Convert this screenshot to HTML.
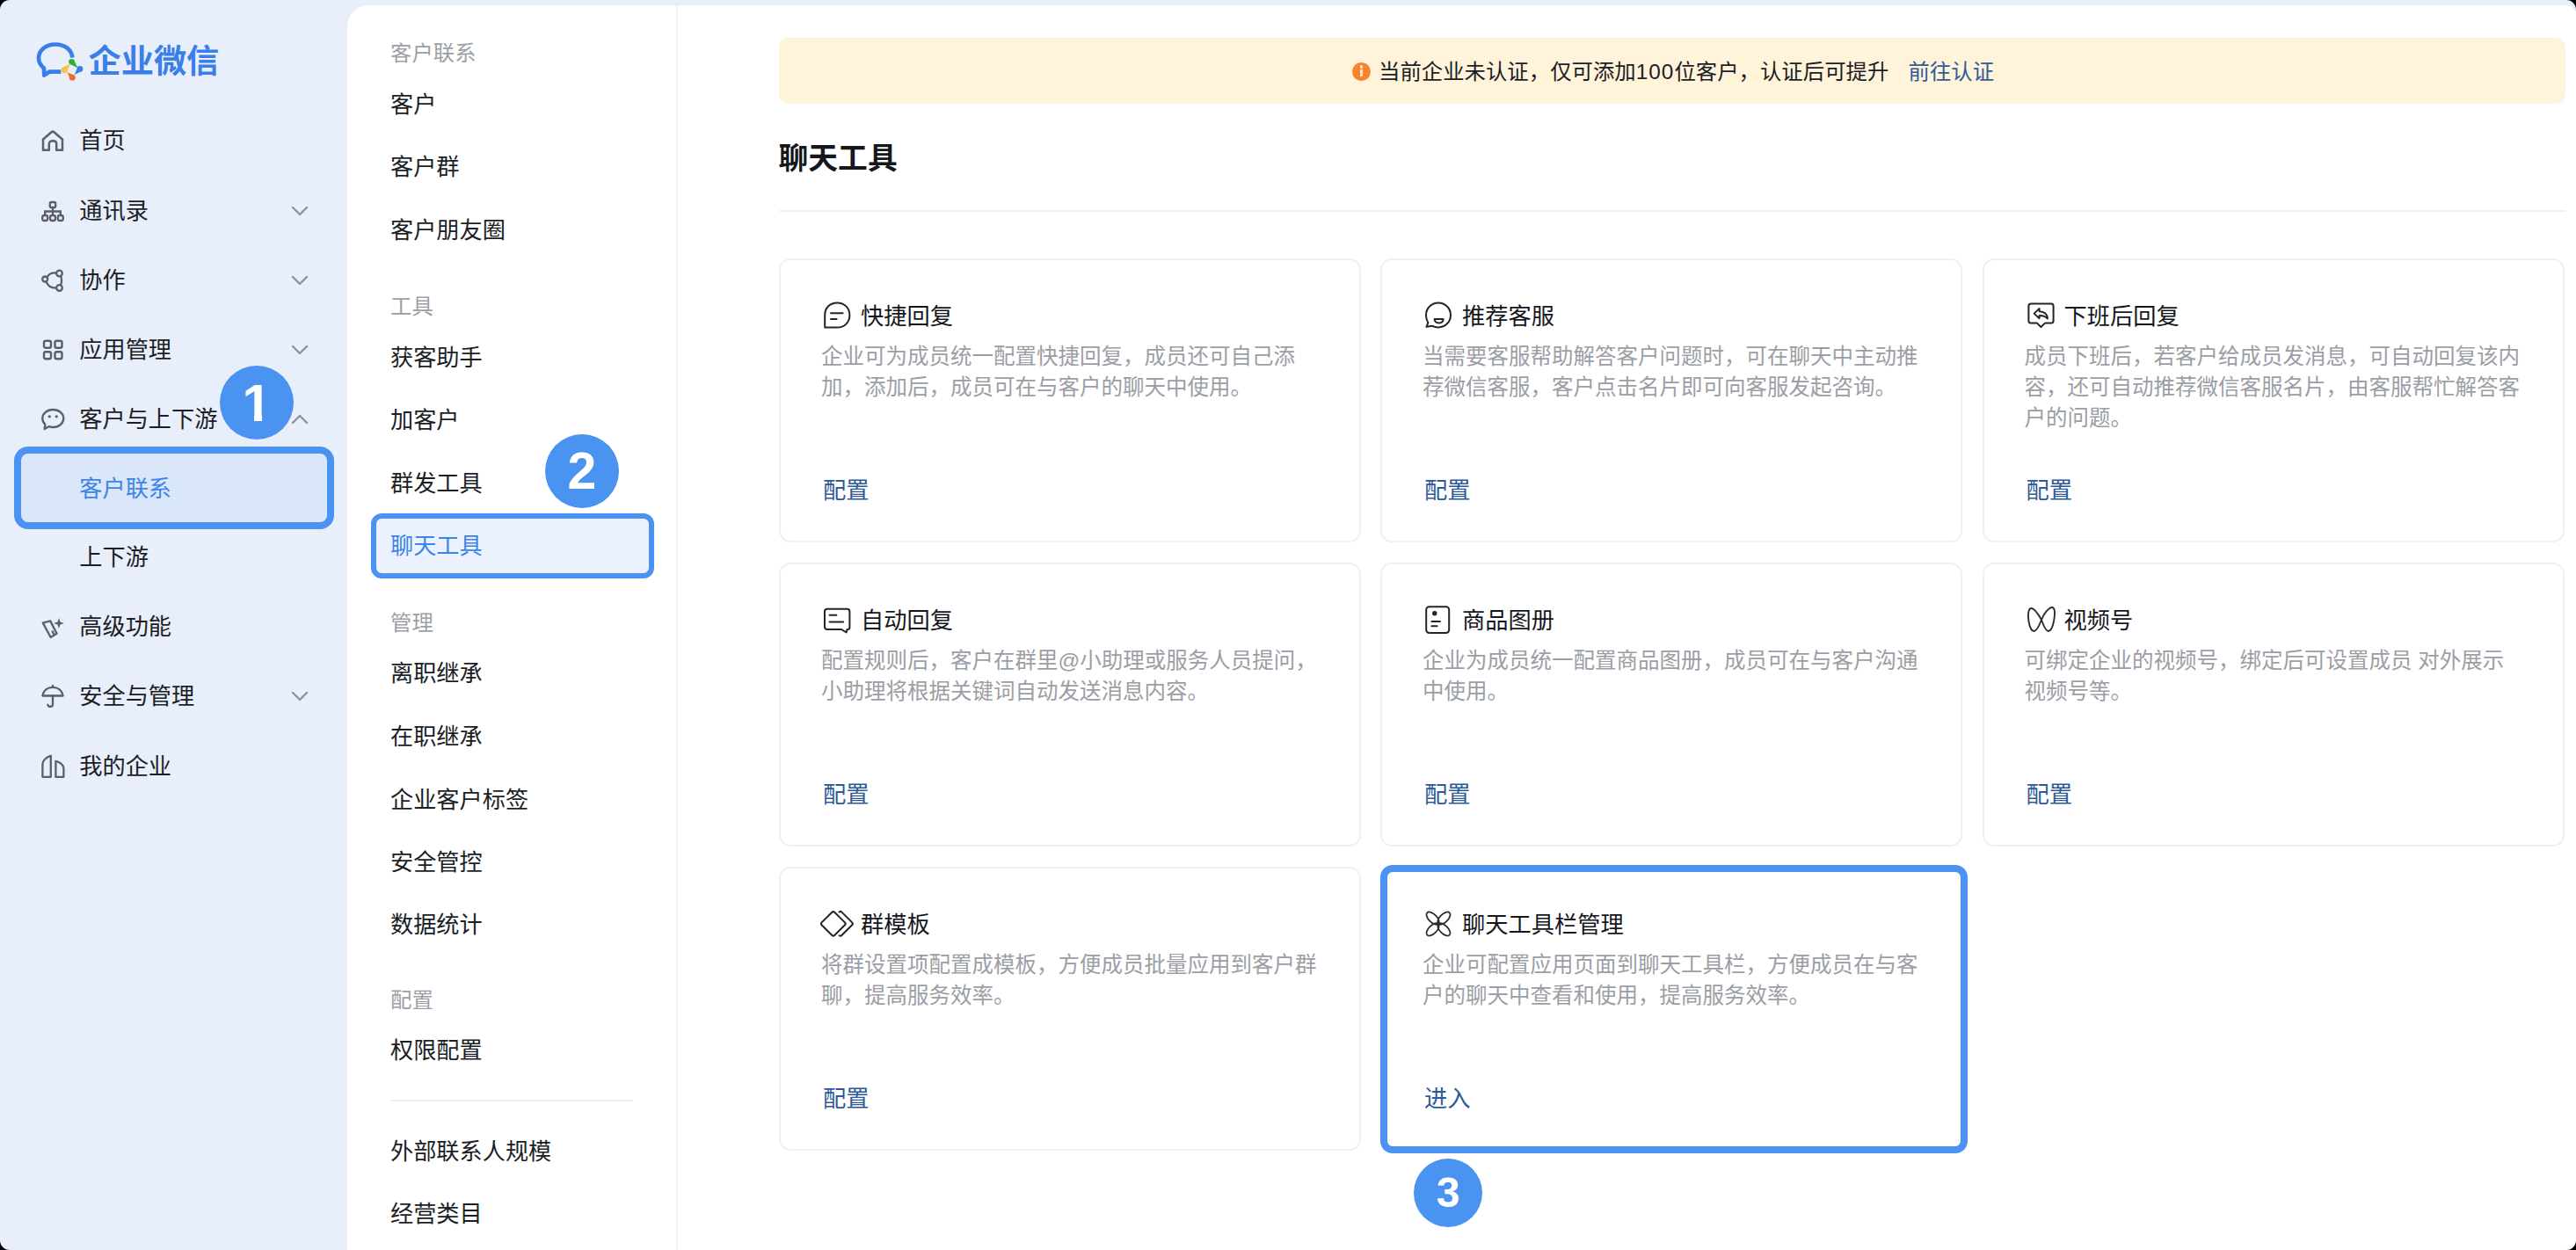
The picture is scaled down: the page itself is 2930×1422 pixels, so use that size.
<!DOCTYPE html>
<html lang="zh-CN"><head><meta charset="utf-8"><title>企业微信 - 聊天工具</title>
<style>
html,body{margin:0;padding:0;}
html{background:#000;}
body{width:2930px;height:1422px;position:relative;overflow:hidden;background:#e8eefa;border-radius:11px;font-family:"Liberation Sans", "Noto Sans CJK SC", sans-serif;}
.t{position:absolute;white-space:nowrap;}
.abs{position:absolute;}
.panel{position:absolute;left:395px;top:6px;width:2535px;height:1416px;background:#fff;border-radius:24px 11px 11px 0;}
.vline{position:absolute;left:769px;top:6px;width:2px;height:1416px;background:#eff0f6;}
.card{position:absolute;width:658px;height:319px;border:2px solid #f0f0f2;border-radius:13px;background:#fff;}
.desc{position:absolute;font-size:24.4px;line-height:34px;color:#9a9da4;white-space:nowrap;}
svg{position:absolute;overflow:visible;}
.circ{position:absolute;border-radius:50%;background:#4a93f0;color:#fff;text-align:center;font-weight:700;}
</style></head><body>

<svg style="left:0;top:0" width="120" height="100" viewBox="0 0 120 100"><path d="M82.3 65.5 C81.8 56.5 73.5 50.5 63 50.5 C52 50.5 44 57.5 44 66 C44 70.6 46.3 74.6 50 77.6 L50.2 85.6 L56.5 81.6 L69.4 81.6" fill="none" stroke="#3a7fe9" stroke-width="4.7" stroke-linejoin="round" stroke-linecap="butt"/><circle cx="81.5" cy="70.2" r="3.3" fill="#2fad3c"/><path d="M79.1 72.5 L88.6 77.6 L83.9 67.9 Z" fill="#2fad3c"/><circle cx="73.4" cy="79.6" r="3.6" fill="#f6c640"/><path d="M76.0 82.1 L80.2 72.6 L70.8 77.1 Z" fill="#f6c640"/><circle cx="82.3" cy="88.2" r="3.4" fill="#ee6a2d"/><path d="M84.8 85.9 L76.8 82.2 L79.8 90.5 Z" fill="#ee6a2d"/><circle cx="91.0" cy="78.4" r="3.3" fill="#3a7fe9"/><path d="M88.6 76.1 L84.6 85.0 L93.4 80.7 Z" fill="#3a7fe9"/></svg>
<div class="t" style="left:100.5px;top:41.50px;height:56px;line-height:56px;font-size:37.2px;color:#3a7fe9;font-weight:700;">企业微信</div>
<svg style="left:47px;top:147px" width="26" height="26" viewBox="0 0 26 26"><path d="M2 11.5 L11.6 3.2 C12.4 2.5 13.6 2.5 14.4 3.2 L24 11.5 V23.8 H17.2 V16.5 C17.2 14.5 15.5 13.3 13 13.3 C10.5 13.3 8.8 14.5 8.8 16.5 V23.8 H2 Z" fill="none" stroke="#5a5f6a" stroke-width="2.5" stroke-linejoin="round"/></svg>
<div class="t" style="left:90.3px;top:140.80px;height:39px;line-height:39px;font-size:26.2px;color:#1b1e25;font-weight:400;">首页</div>
<svg style="left:47px;top:227px" width="26" height="26" viewBox="0 0 26 26"><g fill="none" stroke="#5a5f6a" stroke-width="2.3"><rect x="9.8" y="3" width="6.4" height="6" rx="1.6"/><rect x="1.2" y="18" width="6" height="6" rx="2.2"/><rect x="10" y="18" width="6" height="6" rx="2.2"/><rect x="18.8" y="18" width="6" height="6" rx="2.2"/><path d="M13 9 V13.5 M4.2 18 V13.5 H21.8 V18 M13 13.5 V18"/></g></svg>
<div class="t" style="left:90.3px;top:220.80px;height:39px;line-height:39px;font-size:26.2px;color:#1b1e25;font-weight:400;">通讯录</div>
<svg style="left:331px;top:234px" width="20" height="12" viewBox="0 0 20 12"><path d="M2 2 L10 10 L18 2" fill="none" stroke="#8d929c" stroke-width="2.4" stroke-linecap="round" stroke-linejoin="round"/></svg>
<svg style="left:47px;top:306px" width="26" height="26" viewBox="0 0 26 26"><g fill="none" stroke="#5a5f6a" stroke-width="2.3"><circle cx="20.5" cy="5" r="3.3"/><circle cx="20.5" cy="21.5" r="3.3"/><circle cx="4.2" cy="11.5" r="3"/><path d="M17.2 4.5 C11.5 4 8 6.3 6.6 9.5 M5.5 14.4 C7.2 19 11.5 21.8 17.2 21.6 M22 8 C23.4 11.3 23.4 15 22 18.5"/></g></svg>
<div class="t" style="left:90.3px;top:299.80px;height:39px;line-height:39px;font-size:26.2px;color:#1b1e25;font-weight:400;">协作</div>
<svg style="left:331px;top:313px" width="20" height="12" viewBox="0 0 20 12"><path d="M2 2 L10 10 L18 2" fill="none" stroke="#8d929c" stroke-width="2.4" stroke-linecap="round" stroke-linejoin="round"/></svg>
<svg style="left:47px;top:385px" width="26" height="26" viewBox="0 0 26 26"><g fill="none" stroke="#5a5f6a" stroke-width="2.4"><rect x="3" y="2.8" width="8" height="8" rx="2"/><rect x="15.5" y="2.8" width="8" height="8" rx="2"/><rect x="3" y="15.3" width="8" height="8" rx="2"/><rect x="15.5" y="15.3" width="8" height="8" rx="2"/></g></svg>
<div class="t" style="left:90.3px;top:378.80px;height:39px;line-height:39px;font-size:26.2px;color:#1b1e25;font-weight:400;">应用管理</div>
<svg style="left:331px;top:392px" width="20" height="12" viewBox="0 0 20 12"><path d="M2 2 L10 10 L18 2" fill="none" stroke="#8d929c" stroke-width="2.4" stroke-linecap="round" stroke-linejoin="round"/></svg>
<svg style="left:47px;top:464px" width="26" height="26" viewBox="0 0 26 26"><g fill="none" stroke="#5a5f6a" stroke-width="2.3"><path d="M13.3 2 C20 2 25.3 6.4 25.3 12 C25.3 17.6 20 22 13.3 22 C11.6 22 10 21.7 8.5 21.2 L3.6 24 L4.4 18.8 C2.4 17 1.3 14.6 1.3 12 C1.3 6.4 6.6 2 13.3 2 Z" stroke-linejoin="round"/></g><circle cx="9.3" cy="9.8" r="1.6" fill="#5a5f6a"/><circle cx="17.3" cy="9.8" r="1.6" fill="#5a5f6a"/></svg>
<div class="t" style="left:90.3px;top:457.80px;height:39px;line-height:39px;font-size:26.2px;color:#1b1e25;font-weight:400;">客户与上下游</div>
<svg style="left:331px;top:471px" width="20" height="12" viewBox="0 0 20 12"><path d="M2 10 L10 2 L18 10" fill="none" stroke="#8d929c" stroke-width="2.4" stroke-linecap="round" stroke-linejoin="round"/></svg>
<svg style="left:47px;top:700px" width="26" height="26" viewBox="0 0 26 26"><g fill="none" stroke="#5a5f6a" stroke-width="2.3" stroke-linejoin="round"><path d="M1.8 8.6 L10.2 6.4 L17.6 20.8 L10.6 25 Z"/><path d="M12.2 17.5 L15.2 23"/></g><path d="M20 3 L21.5 7.6 L26 9 L21.5 10.4 L20 15 L18.5 10.4 L14 9 L18.5 7.6 Z" fill="#5a5f6a"/></svg>
<div class="t" style="left:90.3px;top:693.80px;height:39px;line-height:39px;font-size:26.2px;color:#1b1e25;font-weight:400;">高级功能</div>
<svg style="left:47px;top:779px" width="26" height="26" viewBox="0 0 26 26"><g fill="none" stroke="#5a5f6a" stroke-width="2.3" stroke-linecap="round" stroke-linejoin="round"><path d="M1.4 12.5 C2.4 6.5 7 2.8 13 2.8 C19 2.8 23.6 6.5 24.6 12.5 Z"/><path d="M13 0.8 V2.8 M13 12.5 V22.5 C13 25.4 8.4 25.8 7.4 22.8"/></g></svg>
<div class="t" style="left:90.3px;top:772.80px;height:39px;line-height:39px;font-size:26.2px;color:#1b1e25;font-weight:400;">安全与管理</div>
<svg style="left:331px;top:786px" width="20" height="12" viewBox="0 0 20 12"><path d="M2 2 L10 10 L18 2" fill="none" stroke="#8d929c" stroke-width="2.4" stroke-linecap="round" stroke-linejoin="round"/></svg>
<svg style="left:47px;top:859px" width="26" height="26" viewBox="0 0 26 26"><g fill="none" stroke="#5a5f6a" stroke-width="2.3" stroke-linejoin="round"><path d="M1.4 24.8 V10.5 C1.4 6 6 2.2 10.8 0.8 V24.8 Z"/><path d="M16.4 24.8 V6.8 C21 7.8 25.4 11 25.4 15 V24.8 Z"/></g></svg>
<div class="t" style="left:90.3px;top:852.80px;height:39px;line-height:39px;font-size:26.2px;color:#1b1e25;font-weight:400;">我的企业</div>
<div class="abs" style="left:16px;top:508px;width:348px;height:78px;border:8px solid #4a93f0;border-radius:16px;background:#dae6fa;"></div>
<div class="t" style="left:90.3px;top:536.80px;height:39px;line-height:39px;font-size:26.2px;color:#3d84e8;font-weight:400;">客户联系</div>
<div class="t" style="left:90.3px;top:614.80px;height:39px;line-height:39px;font-size:26.2px;color:#1b1e25;font-weight:400;">上下游</div>
<div class="panel"></div><div class="vline"></div>
<div class="abs" style="left:422px;top:584px;width:310px;height:62px;border:6px solid #4a93f0;border-radius:12px;background:#ebf1fd;"></div>
<div class="t" style="left:444px;top:41.50px;height:37px;line-height:37px;font-size:24.4px;color:#9c9fa6;font-weight:400;">客户联系</div>
<div class="t" style="left:444px;top:99.50px;height:39px;line-height:39px;font-size:26.2px;color:#1b1e25;font-weight:400;">客户</div>
<div class="t" style="left:444px;top:170.50px;height:39px;line-height:39px;font-size:26.2px;color:#1b1e25;font-weight:400;">客户群</div>
<div class="t" style="left:444px;top:242.50px;height:39px;line-height:39px;font-size:26.2px;color:#1b1e25;font-weight:400;">客户朋友圈</div>
<div class="t" style="left:444px;top:329.50px;height:37px;line-height:37px;font-size:24.4px;color:#9c9fa6;font-weight:400;">工具</div>
<div class="t" style="left:444px;top:387.50px;height:39px;line-height:39px;font-size:26.2px;color:#1b1e25;font-weight:400;">获客助手</div>
<div class="t" style="left:444px;top:458.50px;height:39px;line-height:39px;font-size:26.2px;color:#1b1e25;font-weight:400;">加客户</div>
<div class="t" style="left:444px;top:530.50px;height:39px;line-height:39px;font-size:26.2px;color:#1b1e25;font-weight:400;">群发工具</div>
<div class="t" style="left:444px;top:601.50px;height:39px;line-height:39px;font-size:26.2px;color:#3d84e8;font-weight:400;">聊天工具</div>
<div class="t" style="left:444px;top:689.50px;height:37px;line-height:37px;font-size:24.4px;color:#9c9fa6;font-weight:400;">管理</div>
<div class="t" style="left:444px;top:746.50px;height:39px;line-height:39px;font-size:26.2px;color:#1b1e25;font-weight:400;">离职继承</div>
<div class="t" style="left:444px;top:818.50px;height:39px;line-height:39px;font-size:26.2px;color:#1b1e25;font-weight:400;">在职继承</div>
<div class="t" style="left:444px;top:890.50px;height:39px;line-height:39px;font-size:26.2px;color:#1b1e25;font-weight:400;">企业客户标签</div>
<div class="t" style="left:444px;top:961.50px;height:39px;line-height:39px;font-size:26.2px;color:#1b1e25;font-weight:400;">安全管控</div>
<div class="t" style="left:444px;top:1032.50px;height:39px;line-height:39px;font-size:26.2px;color:#1b1e25;font-weight:400;">数据统计</div>
<div class="t" style="left:444px;top:1118.50px;height:37px;line-height:37px;font-size:24.4px;color:#9c9fa6;font-weight:400;">配置</div>
<div class="t" style="left:444px;top:1175.50px;height:39px;line-height:39px;font-size:26.2px;color:#1b1e25;font-weight:400;">权限配置</div>
<div class="t" style="left:444px;top:1290.50px;height:39px;line-height:39px;font-size:26.2px;color:#1b1e25;font-weight:400;">外部联系人规模</div>
<div class="t" style="left:444px;top:1361.50px;height:39px;line-height:39px;font-size:26.2px;color:#1b1e25;font-weight:400;">经营类目</div>
<div class="abs" style="left:444px;top:1251px;width:276px;height:2px;background:#eeeef1;"></div>
<div class="abs" style="left:886px;top:43px;width:2032px;height:75px;background:#fff3d9;border-radius:11px;"></div>
<div class="abs" style="left:1538px;top:70.5px;width:21px;height:21px;border-radius:50%;background:#f6842a;"></div>
<div class="abs" style="left:1546.8px;top:74.4px;width:3.4px;height:3.4px;border-radius:50%;background:#ffe9d2;"></div><div class="abs" style="left:1546.8px;top:79px;width:3.4px;height:8.2px;background:#ffe9d2;"></div>
<div class="t" style="left:1568px;top:62.50px;height:37px;line-height:37px;font-size:24.4px;color:#1b1e25;font-weight:400;">当前企业未认证，仅可添加<span style="letter-spacing:1px">100</span>位客户，认证后可提升</div>
<div class="t" style="left:2170.5px;top:62.50px;height:37px;line-height:37px;font-size:24.4px;color:#2f5c96;font-weight:400;">前往认证</div>
<div class="t" style="left:885.5px;top:154.50px;height:51px;line-height:51px;font-size:33.8px;color:#15171c;font-weight:700;">聊天工具</div>
<div class="abs" style="left:886px;top:239px;width:2032px;height:2px;background:#eeeef1;"></div>
<div class="card" style="left:886px;top:294px;"></div>
<svg style="left:936px;top:342px" width="34" height="34" viewBox="0 0 34 34"><g fill="none" stroke="#222429" stroke-width="2" stroke-linejoin="round"><path d="M2.2 30.6 V16 C2.2 8 8.2 2.4 16.2 2.4 C24.4 2.4 30.4 8.4 30.4 16.5 C30.4 24.6 24.4 30.6 16.2 30.6 Z"/><path d="M9 14.2 H22.6 M9 21 H15.6" stroke-linecap="round"/></g></svg>
<div class="t" style="left:979px;top:341.00px;height:39px;line-height:39px;font-size:26.25px;color:#15171c;font-weight:400;">快捷回复</div>
<div class="t" style="left:934px;top:387.20px;height:37px;line-height:37px;font-size:24.5px;color:#9b9ea5;font-weight:400;">企业可为成员统一配置快捷回复，成员还可自己添</div>
<div class="t" style="left:934px;top:422.20px;height:37px;line-height:37px;font-size:24.5px;color:#9b9ea5;font-weight:400;">加，添加后，成员可在与客户的聊天中使用。</div>
<div class="t" style="left:936px;top:538.50px;height:39px;line-height:39px;font-size:26.3px;color:#2d5a97;font-weight:400;">配置</div>
<div class="card" style="left:1570px;top:294px;"></div>
<svg style="left:1620px;top:342px" width="34" height="34" viewBox="0 0 34 34"><g fill="none" stroke="#222429" stroke-width="2" stroke-linejoin="round" stroke-linecap="round"><path d="M4.4 25.2 C2.8 22.6 2 19.6 2 16.4 C2 8.6 8.2 2.4 16 2.4 C23.8 2.4 30 8.6 30 16.4 C30 24.2 23.8 30.4 16 30.4 C13.4 30.4 11.2 29.8 9.2 28.8 L2.4 29.8 Z"/><path d="M11.6 21 H21.6 C21.6 23.8 19.4 25.4 16.6 25.4 C13.8 25.4 11.6 23.8 11.6 21 Z"/></g></svg>
<div class="t" style="left:1663px;top:341.00px;height:39px;line-height:39px;font-size:26.25px;color:#15171c;font-weight:400;">推荐客服</div>
<div class="t" style="left:1618px;top:387.20px;height:37px;line-height:37px;font-size:24.5px;color:#9b9ea5;font-weight:400;">当需要客服帮助解答客户问题时，可在聊天中主动推</div>
<div class="t" style="left:1618px;top:422.20px;height:37px;line-height:37px;font-size:24.5px;color:#9b9ea5;font-weight:400;">荐微信客服，客户点击名片即可向客服发起咨询。</div>
<div class="t" style="left:1620px;top:538.50px;height:39px;line-height:39px;font-size:26.3px;color:#2d5a97;font-weight:400;">配置</div>
<div class="card" style="left:2254.5px;top:294px;"></div>
<svg style="left:2304.5px;top:342px" width="34" height="34" viewBox="0 0 34 34"><g fill="none" stroke="#222429" stroke-width="2" stroke-linejoin="round" stroke-linecap="round"><path d="M5 3.4 H28 C29.6 3.4 30.6 4.4 30.6 6 V23 C30.6 24.6 29.6 25.6 28 25.6 H21 L16.4 30 L12 25.6 H5 C3.4 25.6 2.4 24.6 2.4 23 V6 C2.4 4.4 3.4 3.4 5 3.4 Z"/><path d="M14.6 9 L8.6 14.6 L14.6 20.2 V17 C18.6 16.8 21.6 18 24 20.6 C23.6 15.6 20.4 12.4 14.6 12.2 Z" stroke-width="1.9"/></g></svg>
<div class="t" style="left:2347.5px;top:341.00px;height:39px;line-height:39px;font-size:26.25px;color:#15171c;font-weight:400;">下班后回复</div>
<div class="t" style="left:2302.5px;top:387.20px;height:37px;line-height:37px;font-size:24.5px;color:#9b9ea5;font-weight:400;">成员下班后，若客户给成员发消息，可自动回复该内</div>
<div class="t" style="left:2302.5px;top:422.20px;height:37px;line-height:37px;font-size:24.5px;color:#9b9ea5;font-weight:400;">容，还可自动推荐微信客服名片，由客服帮忙解答客</div>
<div class="t" style="left:2302.5px;top:457.20px;height:37px;line-height:37px;font-size:24.5px;color:#9b9ea5;font-weight:400;">户的问题。</div>
<div class="t" style="left:2304.5px;top:538.50px;height:39px;line-height:39px;font-size:26.3px;color:#2d5a97;font-weight:400;">配置</div>
<div class="card" style="left:886px;top:640px;"></div>
<svg style="left:936px;top:688px" width="34" height="34" viewBox="0 0 34 34"><g fill="none" stroke="#222429" stroke-width="2" stroke-linejoin="round" stroke-linecap="round"><path d="M5 4.7 H27.4 C29.4 4.7 30.4 5.7 30.4 7.7 V25.8 C30.4 27.4 29.4 28 28.4 28 L27.6 28 L26.6 31.4 L21 28 H5 C3 28 2 27 2 25 V7.7 C2 5.7 3 4.7 5 4.7 Z"/><path d="M7.6 11.8 H15.4 M7.6 19.6 H23.2"/></g></svg>
<div class="t" style="left:979px;top:687.00px;height:39px;line-height:39px;font-size:26.25px;color:#15171c;font-weight:400;">自动回复</div>
<div class="t" style="left:934px;top:733.20px;height:37px;line-height:37px;font-size:24.5px;color:#9b9ea5;font-weight:400;">配置规则后，客户在群里@小助理或服务人员提问，</div>
<div class="t" style="left:934px;top:768.20px;height:37px;line-height:37px;font-size:24.5px;color:#9b9ea5;font-weight:400;">小助理将根据关键词自动发送消息内容。</div>
<div class="t" style="left:936px;top:884.50px;height:39px;line-height:39px;font-size:26.3px;color:#2d5a97;font-weight:400;">配置</div>
<div class="card" style="left:1570px;top:640px;"></div>
<svg style="left:1620px;top:688px" width="34" height="34" viewBox="0 0 34 34"><g fill="none" stroke="#222429" stroke-width="2" stroke-linejoin="round" stroke-linecap="round"><rect x="2.2" y="2.2" width="26" height="29.8" rx="3.4"/><path d="M8.4 19 H18 M8.4 24.2 H14.6"/></g><circle cx="11.8" cy="9.7" r="2.7" fill="#222429"/></svg>
<div class="t" style="left:1663px;top:687.00px;height:39px;line-height:39px;font-size:26.25px;color:#15171c;font-weight:400;">商品图册</div>
<div class="t" style="left:1618px;top:733.20px;height:37px;line-height:37px;font-size:24.5px;color:#9b9ea5;font-weight:400;">企业为成员统一配置商品图册，成员可在与客户沟通</div>
<div class="t" style="left:1618px;top:768.20px;height:37px;line-height:37px;font-size:24.5px;color:#9b9ea5;font-weight:400;">中使用。</div>
<div class="t" style="left:1620px;top:884.50px;height:39px;line-height:39px;font-size:26.3px;color:#2d5a97;font-weight:400;">配置</div>
<div class="card" style="left:2254.5px;top:640px;"></div>
<svg style="left:2304.5px;top:688px" width="34" height="34" viewBox="0 0 34 34"><g fill="none" stroke="#2a2c31" stroke-width="1.9" stroke-linejoin="round" stroke-linecap="round"><path d="M17 17 C13 10 8.5 4 5.4 4 C2 4 1.4 11 2.4 18 C3.4 25 5.6 30 8.6 30 C11.6 30 14.4 24 17 17 C19.6 10 25.4 3 29 3 C32.6 3 32.6 10.5 31.2 18 C29.8 25 27.8 30 24.8 30 C21.8 30 19.4 24 17 17 Z"/></g></svg>
<div class="t" style="left:2347.5px;top:687.00px;height:39px;line-height:39px;font-size:26.25px;color:#15171c;font-weight:400;">视频号</div>
<div class="t" style="left:2302.5px;top:733.20px;height:37px;line-height:37px;font-size:24.5px;color:#9b9ea5;font-weight:400;">可绑定企业的视频号，绑定后可设置成员 对外展示</div>
<div class="t" style="left:2302.5px;top:768.20px;height:37px;line-height:37px;font-size:24.5px;color:#9b9ea5;font-weight:400;">视频号等。</div>
<div class="t" style="left:2304.5px;top:884.50px;height:39px;line-height:39px;font-size:26.3px;color:#2d5a97;font-weight:400;">配置</div>
<div class="card" style="left:886px;top:986px;"></div>
<svg style="left:936px;top:1034px" width="34" height="34" viewBox="0 0 34 34"><g fill="none" stroke="#222429" stroke-width="2" stroke-linejoin="round" stroke-linecap="round"><path d="M10.4 3.8 C11.2 3 12.4 3 13.2 3.8 L25 15.4 C25.8 16.2 25.8 17.4 25 18.2 L13.2 30 C12.4 30.8 11.2 30.8 10.4 30 L-1.4 18.2 C-2.2 17.4 -2.2 16.2 -1.4 15.4 Z"/><path d="M18.6 3.4 C19.4 2.8 20.6 2.8 21.4 3.6 L33.2 15.4 C34 16.2 34 17.4 33.2 18.2 L21.4 30 C20.6 30.8 19.4 30.8 18.6 30.2"/></g></svg>
<div class="t" style="left:979px;top:1033.00px;height:39px;line-height:39px;font-size:26.25px;color:#15171c;font-weight:400;">群模板</div>
<div class="t" style="left:934px;top:1079.20px;height:37px;line-height:37px;font-size:24.5px;color:#9b9ea5;font-weight:400;">将群设置项配置成模板，方便成员批量应用到客户群</div>
<div class="t" style="left:934px;top:1114.20px;height:37px;line-height:37px;font-size:24.5px;color:#9b9ea5;font-weight:400;">聊，提高服务效率。</div>
<div class="t" style="left:936px;top:1230.50px;height:39px;line-height:39px;font-size:26.3px;color:#2d5a97;font-weight:400;">配置</div>
<div class="card" style="left:1570px;top:986px;"></div>
<svg style="left:1620px;top:1034px" width="34" height="34" viewBox="0 0 34 34"><g fill="none" stroke="#2a2c31" stroke-width="1.8"><ellipse cx="9" cy="0" rx="9" ry="4.6" transform="translate(16 17) rotate(45)"/><ellipse cx="9" cy="0" rx="9" ry="4.6" transform="translate(16 17) rotate(135)"/><ellipse cx="9" cy="0" rx="9" ry="4.6" transform="translate(16 17) rotate(225)"/><ellipse cx="9" cy="0" rx="9" ry="4.6" transform="translate(16 17) rotate(315)"/></g></svg>
<div class="t" style="left:1663px;top:1033.00px;height:39px;line-height:39px;font-size:26.25px;color:#15171c;font-weight:400;">聊天工具栏管理</div>
<div class="t" style="left:1618px;top:1079.20px;height:37px;line-height:37px;font-size:24.5px;color:#9b9ea5;font-weight:400;">企业可配置应用页面到聊天工具栏，方便成员在与客</div>
<div class="t" style="left:1618px;top:1114.20px;height:37px;line-height:37px;font-size:24.5px;color:#9b9ea5;font-weight:400;">户的聊天中查看和使用，提高服务效率。</div>
<div class="t" style="left:1620px;top:1230.50px;height:39px;line-height:39px;font-size:26.3px;color:#2d5a97;font-weight:400;">进入</div>
<div class="abs" style="left:1570px;top:984px;width:652px;height:312px;border:8px solid #4a93f0;border-radius:14px;"></div>
<div class="circ" style="left:250px;top:416px;width:84px;height:84px;line-height:85.6px;font-size:59.5px;">1</div>
<div class="abs" style="left:277px;top:473px;width:11.6px;height:8px;background:#4a93f0;"></div><div class="abs" style="left:297.6px;top:473px;width:11px;height:8px;background:#4a93f0;"></div>
<div class="circ" style="left:620px;top:494px;width:84px;height:84px;line-height:85.0px;font-size:59px;">2</div>
<div class="circ" style="left:1608px;top:1318px;width:78px;height:78px;line-height:78px;font-size:48px;">3</div>
</body></html>
